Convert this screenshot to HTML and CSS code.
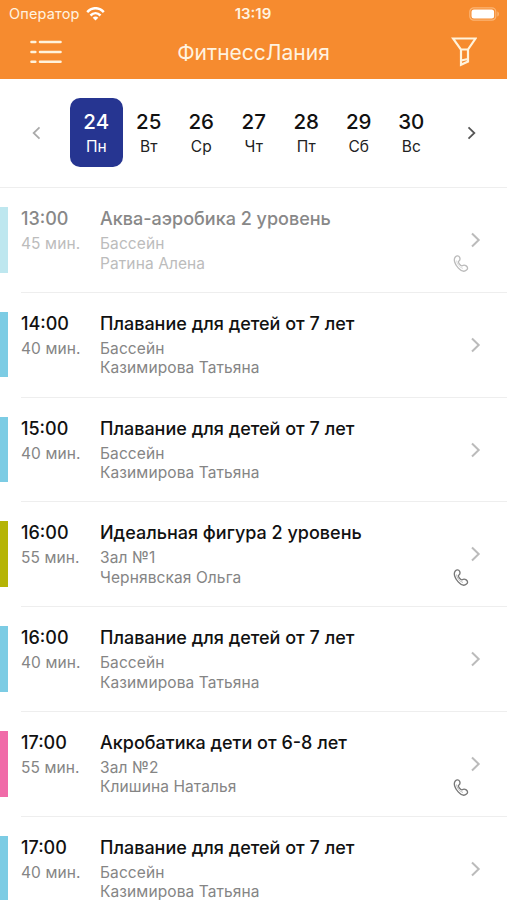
FILE: index.html
```html
<!DOCTYPE html>
<html lang="ru">
<head>
<meta charset="utf-8">
<title>ФитнессЛания</title>
<link rel="stylesheet" href="styles.css">
</head>
<body>
<svg width="0" height="0" class="defs">
  <symbol id="chev" viewBox="0 0 12 16"><path d="M2 1.5 8.7 8 2 14.5" fill="none" stroke="currentColor" stroke-width="2"/></symbol>
  <symbol id="phone" viewBox="0 0 16 18"><path d="M2.300 2C3.700.5 5.700.6 6.600 2.300c.8 1.700.5 2.900-.9 3.900-.6.500-.1 1.700.8 2.900 1 1.300 2 2 2.700 1.600 1.400-.9 2.600-.9 4 .2 1.700 1.300 1.800 2.900.3 4.200-2 1.700-5.200 1.200-8.300-2.200C1.800 9.300.2 4.300 2.300 2Z" fill="none" stroke="currentColor" stroke-width="1.350"/><path d="M3.500 5.500C3.700 8.500 6.500 12.500 10 13.500" fill="none" stroke="currentColor" stroke-width=".5"/></symbol>
</svg>
<header class="top">
  <div class="status">
    <div class="carrier"><span>Оператор</span>
      <svg width="19" height="14" viewBox="0 0 19 14" fill="none" stroke="#fff" stroke-width="2.500"><path d="M1.200 5.100C6-.1 13-.1 17.800 5.100M4.500 8.500c3-3 7-3 10 0"/><path d="M9.500 13.500 6.700 10.700c1.500-1.500 4.100-1.500 5.600 0Z" fill="#fff" stroke="none"/></svg>
    </div>
    <span class="clock">13:19</span>
    <svg class="battery" width="31" height="14" viewBox="0 0 31 14"><rect x=".8" y=".8" width="26" height="12.400" rx="4" fill="none" stroke="#fbb575" stroke-width="1.200"/><rect x="2.500" y="2.500" width="22.600" height="9" rx="2.500" fill="#fff"/><path d="M28.300 4.500c2.200.6 2.200 4.400 0 5Z" fill="#fbb575"/></svg>
  </div>
  <div class="nav">
    <svg width="32" height="24" viewBox="0 0 32 24" stroke="#fff3dc" stroke-width="2.600" stroke-linecap="round"><path d="M1.500 2h3.800M10 2h20.500M1.500 12h3.800M10 12h20.500M1.500 21.700h3.800M10 21.700h20.500"/></svg>
    <h1>ФитнессЛания</h1>
    <svg width="26" height="30" viewBox="0 0 26 30" fill="none" stroke="#fff3dc" stroke-width="2.200"><path d="M2 1.500h22.500L17 12.500v12L10 27.700V12.500ZM10 12.500h7M10 23.500l7-1.500"/></svg>
  </div>
</header>
<section class="week">
  <svg class="prev" width="12" height="14"><use href="#chev"/></svg>
  <div class="days">
    <div class="day on"><b>24</b><span>Пн</span></div>
    <div class="day"><b>25</b><span>Вт</span></div>
    <div class="day"><b>26</b><span>Ср</span></div>
    <div class="day"><b>27</b><span>Чт</span></div>
    <div class="day"><b>28</b><span>Пт</span></div>
    <div class="day"><b>29</b><span>Сб</span></div>
    <div class="day"><b>30</b><span>Вс</span></div>
  </div>
  <svg class="next" width="12" height="14"><use href="#chev"/></svg>
</section>
<main>
  <article class="row past"><i class="bar"></i><div class="time"><b>13:00</b><span>45 мин.</span></div><div class="info"><b>Аква-аэробика 2 уровень</b><span>Бассейн</span><span>Ратина Алена</span></div><div class="side"><svg class="go" width="12" height="16"><use href="#chev"/></svg><svg class="call" width="16" height="18"><use href="#phone"/></svg></div></article>
  <article class="row"><i class="bar"></i><div class="time"><b>14:00</b><span>40 мин.</span></div><div class="info"><b>Плавание для детей от 7 лет</b><span>Бассейн</span><span>Казимирова Татьяна</span></div><div class="side"><svg class="go" width="12" height="16"><use href="#chev"/></svg></div></article>
  <article class="row"><i class="bar"></i><div class="time"><b>15:00</b><span>40 мин.</span></div><div class="info"><b>Плавание для детей от 7 лет</b><span>Бассейн</span><span>Казимирова Татьяна</span></div><div class="side"><svg class="go" width="12" height="16"><use href="#chev"/></svg></div></article>
  <article class="row"><i class="bar olive"></i><div class="time"><b>16:00</b><span>55 мин.</span></div><div class="info"><b>Идеальная фигура 2 уровень</b><span>Зал №1</span><span>Чернявская Ольга</span></div><div class="side"><svg class="go" width="12" height="16"><use href="#chev"/></svg><svg class="call" width="16" height="18"><use href="#phone"/></svg></div></article>
  <article class="row"><i class="bar"></i><div class="time"><b>16:00</b><span>40 мин.</span></div><div class="info"><b>Плавание для детей от 7 лет</b><span>Бассейн</span><span>Казимирова Татьяна</span></div><div class="side"><svg class="go" width="12" height="16"><use href="#chev"/></svg></div></article>
  <article class="row"><i class="bar pink"></i><div class="time"><b>17:00</b><span>55 мин.</span></div><div class="info"><b>Акробатика дети от 6-8 лет</b><span>Зал №2</span><span>Клишина Наталья</span></div><div class="side"><svg class="go" width="12" height="16"><use href="#chev"/></svg><svg class="call" width="16" height="18"><use href="#phone"/></svg></div></article>
  <article class="row"><i class="bar"></i><div class="time"><b>17:00</b><span>40 мин.</span></div><div class="info"><b>Плавание для детей от 7 лет</b><span>Бассейн</span><span>Казимирова Татьяна</span></div><div class="side"><svg class="go" width="12" height="16"><use href="#chev"/></svg></div></article>
</main>
</body>
</html>
```
FILE: styles.css
```css
* { box-sizing: border-box; }
body {
  margin: 0;
  height: 900px;
  overflow: hidden;
  background: #fff;
  font-family: Inter, "Liberation Sans", sans-serif;
  color: #111;
}
.defs { display: block; }
b { font-weight: 500; }
.top { height: 79px; background: #f68b2f; color: #fff3e0; }
.status {
  display: grid;
  grid-template-columns: 1fr auto 1fr;
  align-items: center;
  height: 27px;
  padding: 0 7px 0 9px;
}
.carrier { display: flex; align-items: center; gap: 6px; font-size: 14.5px; letter-spacing: 0.15px; }
.clock { margin-right: 3px; font-size: 15px; font-weight: 600; }
.battery { justify-self: end; }
.nav {
  display: flex;
  align-items: center;
  justify-content: space-between;
  height: 50px;
  padding: 0 30px;
}
.nav h1 { margin: 1px 6px 0 0; font-size: 21px; font-weight: 400; line-height: 28px; }
.week {
  display: flex;
  align-items: center;
  height: 109px;
  padding: 0 29px 0 30px;
  border-bottom: 1px solid #eee;
}
.week > svg { flex: none; color: #555; }
.week .prev { color: #aaa; transform: scaleX(-1); }
.days { display: flex; margin: -1px auto 0 28px; }
.day {
  display: flex;
  flex-direction: column;
  align-items: center;
  width: 52.5px;
  height: 69px;
  padding-top: 10px;
  border-radius: 10px;
}
.day b { font-size: 20.5px; line-height: 28px; }
.day span { font-size: 15.5px; line-height: 22px; color: #222; }
.day.on { background: #263591; color: #fff; }
.day.on span { color: #fff; }
.row { display: flex; height: 104.8px; padding-top: 19px; }
.bar { width: 8px; height: 65.6px; margin-right: 13px; background: #7ccce4; }
.olive { background: #b5b406; }
.pink { background: #f06ba8; }
.time, .info, .side { height: 85.8px; border-bottom: 1px solid #eee; }
.time, .info { display: flex; flex-direction: column; white-space: nowrap; }
.time { width: 79px; }
.info { flex: 1; }
.row b { font-size: 18px; line-height: 24px; margin-bottom: 3px; }
.row span { font-size: 15.5px; line-height: 19.5px; letter-spacing: 0.1px; color: #858585; }
.side { width: 55px; padding-top: 25px; color: #bbb; }
.side svg { display: block; }
.go { margin-left: 18px; }
.call { margin: 7px 0 0 1px; color: #777; }
.past .bar { background: #bee7ef; }
.past b { color: #888; }
.past span { color: #bcbcbc; }
.past .call { color: #bbb; }
```
